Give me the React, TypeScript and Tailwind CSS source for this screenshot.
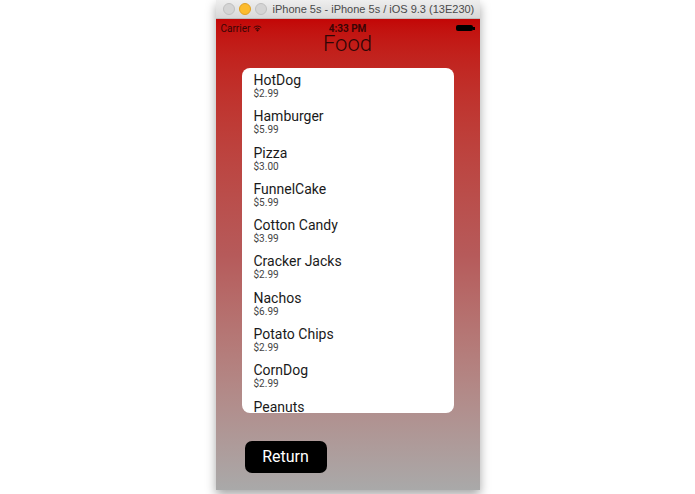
import React from 'react';

const foods = [
  { name: 'HotDog', price: '$2.99' },
  { name: 'Hamburger', price: '$5.99' },
  { name: 'Pizza', price: '$3.00' },
  { name: 'FunnelCake', price: '$5.99' },
  { name: 'Cotton Candy', price: '$3.99' },
  { name: 'Cracker Jacks', price: '$2.99' },
  { name: 'Nachos', price: '$6.99' },
  { name: 'Potato Chips', price: '$2.99' },
  { name: 'CornDog', price: '$2.99' },
  { name: 'Peanuts', price: '$1.99' },
];

function Wifi() {
  return (
    <svg width="9" height="7" viewBox="0 0 18 13" className="ml-[3px]">
      <path d="M9 13 L6 9.5 A4.5 4.5 0 0 1 12 9.5 Z" fill="#3a0505" />
      <path d="M4.2 7.6 A7.3 7.3 0 0 1 13.8 7.6" stroke="#3a0505" strokeWidth="2" fill="none" />
      <path d="M1.5 4.6 A11 11 0 0 1 16.5 4.6" stroke="#3a0505" strokeWidth="2" fill="none" />
    </svg>
  );
}

export default function App() {
  return (
    <div className="w-full h-[494px] bg-white font-['Roboto',sans-serif]">
      <div className="w-[264px] mx-auto shadow-[0_5px_10px_rgba(0,0,0,0.35)]">
        {/* Window title bar */}
        <div className="h-[19px] flex items-center bg-gradient-to-b from-[#eeeeee] to-[#d8d8d8] border-b border-[#bcbcbc] pl-[7px]">
          <div className="flex gap-[4px]">
            <span className="w-[12px] h-[12px] rounded-full bg-[#d4d4d4] border border-[#c0c0c0]" />
            <span className="w-[12px] h-[12px] rounded-full bg-[#fcbb2d] border border-[#e0a023]" />
            <span className="w-[12px] h-[12px] rounded-full bg-[#d4d4d4] border border-[#c0c0c0]" />
          </div>
          <span className="ml-[6px] text-[11px] text-[#4a4a4a] font-['Liberation_Sans',sans-serif] whitespace-nowrap">
            iPhone 5s - iPhone 5s / iOS 9.3 (13E230)
          </span>
        </div>

        {/* Screen */}
        <div className="h-[471px] flex flex-col bg-gradient-to-b from-[#c30606] via-[#b65a5a] via-50% to-[#a9a9a9]">
          <div className="h-[15px] pt-[3px] px-[5px] flex items-center justify-between text-[10px] text-[#3a0505]">
            <div className="flex items-center w-[60px]">
              <span>Carrier</span>
              <Wifi />
            </div>
            <span className="font-bold">4:33 PM</span>
            <div className="w-[60px] flex justify-end items-center">
              <span className="w-[17px] h-[6px] rounded-[2px] bg-black" />
              <span className="w-[1.5px] h-[3px] bg-black" />
            </div>
          </div>

          <div className="h-[20px] leading-[20px] text-center text-[22px] font-light text-[#2e0606]">Food</div>

          <div className="mt-[14px] mx-[26px] h-[345px] bg-white rounded-[8px] overflow-hidden pt-[4px] pl-[12px]">
            {foods.map((f) => (
              <div key={f.name} className="h-[36.3px]">
                <div className="h-[16px] leading-[16px] text-[14px] text-[#1a1a1a]">{f.name}</div>
                <div className="h-[12px] leading-[12px] text-[10px] text-[#444444]">{f.price}</div>
              </div>
            ))}
          </div>

          <div className="mt-[28px] ml-[29px]">
            <button className="w-[82px] h-[32px] rounded-[7px] bg-black text-white text-[16px]">Return</button>
          </div>
        </div>
      </div>
    </div>
  );
}
